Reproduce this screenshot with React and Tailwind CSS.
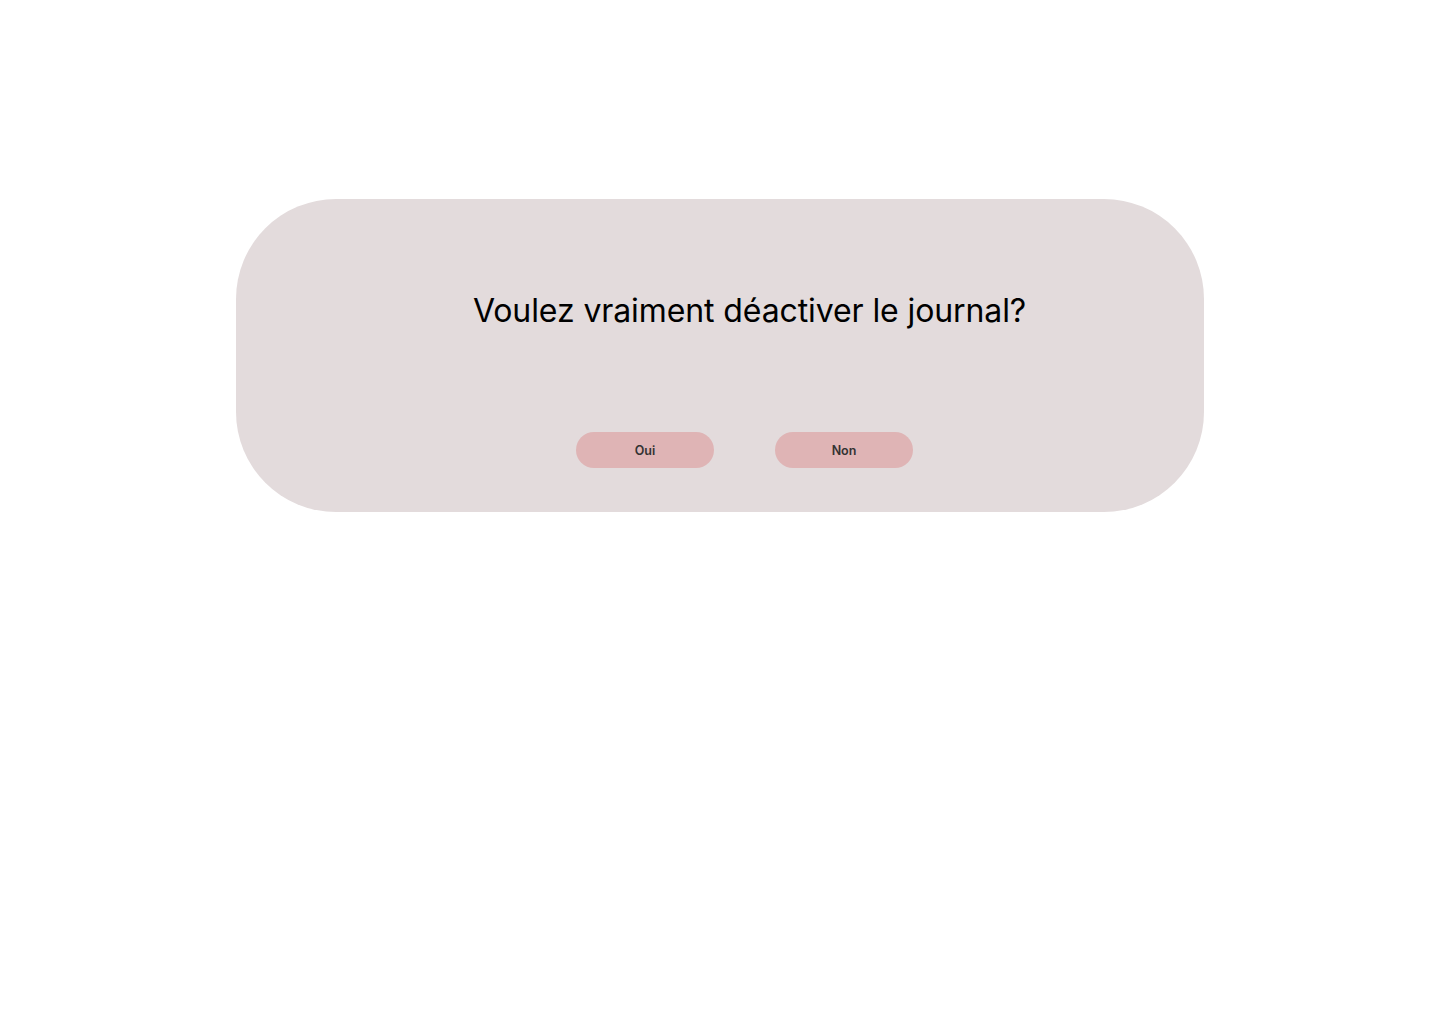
export default function App() {
  return (
    <div className="min-h-screen bg-white pt-[199px]" style={{ fontFamily: 'Inter, "Noto Sans", sans-serif' }}>
      <div className="mx-auto flex h-[313px] w-[968px] flex-col items-center rounded-[100px] bg-[#e3dbdc]">
        <h1 className="mt-[90px] pl-[59px] text-[32px] leading-[44px] tracking-[-0.1px] font-normal text-black">
          Voulez vraiment déactiver le journal?
        </h1>
        <div className="mt-[99px] flex gap-[61px] pl-[49px]">
          <button className="h-[36px] w-[138px] rounded-full bg-[#dfb4b5] pt-[2px] text-[12.5px] font-semibold text-[#333333]">
            Oui
          </button>
          <button className="h-[36px] w-[138px] rounded-full bg-[#dfb4b5] pt-[2px] text-[12.5px] font-semibold text-[#333333]">
            Non
          </button>
        </div>
      </div>
    </div>
  )
}
